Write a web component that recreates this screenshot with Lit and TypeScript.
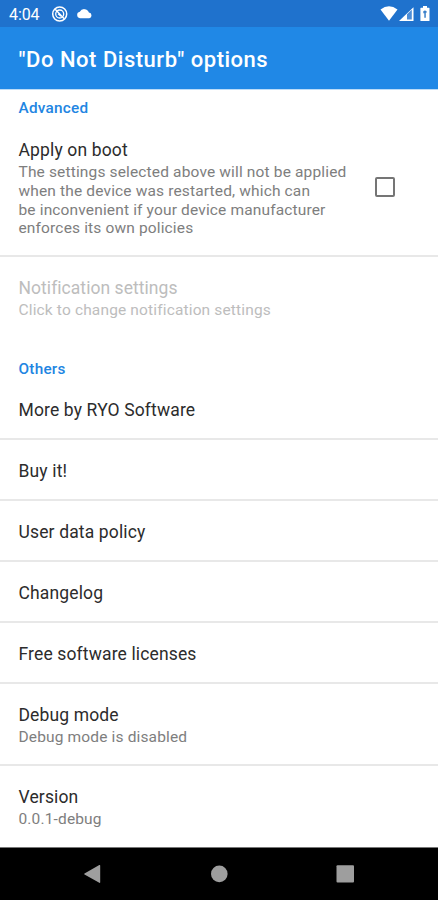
import { LitElement, html, css, svg } from "lit";
import { customElement } from "lit/decorators.js";

const entries = [
  { title: "More by RYO Software", kind: "first" },
  { title: "Buy it!" },
  { title: "User data policy" },
  { title: "Changelog" },
  { title: "Free software licenses" },
  { title: "Debug mode", summary: "Debug mode is disabled" },
  { title: "Version", summary: "0.0.1-debug", kind: "last" },
];

@customElement("app-root")
export class AppRoot extends LitElement {
  static styles = css`
    :host {
      display: flex;
      flex-direction: column;
      width: 438px;
      height: 900px;
      overflow: hidden;
      background: #fff;
      font-family: Roboto, "Liberation Sans", sans-serif;
      color: #2c2c2c;
    }
    * { box-sizing: border-box; }
    svg { display: block; }
    .status {
      height: 27px;
      flex: none;
      display: flex;
      align-items: center;
      background: #1f72cd;
      color: #fff;
      padding: 1px 0 0 9px;
    }
    .clock { width: 42px; font-size: 16px; line-height: 27px; letter-spacing: -0.1px; }
    .left { flex: 1; }
    .bar {
      height: 63px;
      flex: none;
      display: flex;
      align-items: center;
      padding: 3px 18px 0 18.5px;
      background: #2088e6;
      border-bottom: 1px solid #bcdcf8;
      color: #fff;
      font-size: 22px;
      font-weight: 500;
      letter-spacing: 0.52px;
    }
    .list { flex: 1; min-height: 0; display: flex; flex-direction: column; }
    .category {
      padding-left: 18.5px;
      color: #2285e2;
      font-size: 15.3px;
      line-height: 18px;
      font-weight: 500;
      letter-spacing: 0.25px;
      flex: none;
    }
    .advanced { margin-top: 9px; }
    .others { margin-top: 22px; }
    .row {
      display: flex;
      flex-direction: column;
      justify-content: center;
      height: 61px;
      flex: none;
      padding: 2px 18px 0 18.5px;
      border-bottom: 2px solid #e8e8e8;
    }
    .double { height: 82px; }
    .first { margin-top: 1px; }
    .last { height: 81px; border-bottom: 1px solid transparent; }
    .boot {
      height: 140px;
      flex-direction: row;
      align-items: center;
      padding-top: 5px;
    }
    .text { flex: 1; white-space: pre; }
    .title { font-size: 17.5px; line-height: 22px; letter-spacing: 0.14px; }
    .summary {
      font-size: 15.5px;
      line-height: 18.7px;
      letter-spacing: 0.15px;
      color: #7e7e7e;
      margin-top: 2px;
    }
    .disabled { height: 81px; border: 0; padding-top: 2px; }
    .disabled .title { letter-spacing: 0.05px; }
    .disabled .title, .disabled .summary { color: #bdbdbd; }
    .check {
      width: 20px;
      height: 20px;
      border: 2px solid #757575;
      border-radius: 2px;
      margin: 0 25px 4px 0;
    }
    .nav {
      height: 53px;
      flex: none;
      border-top: 1px solid #777;
      background: #000;
    }
  `;

  render() {
    return html`
      <div class="status">
        <span class="clock">4:04</span>
        <svg class="left" width="320" height="26" viewBox="51 1 320 26" preserveAspectRatio="xMinYMid meet">
          ${svg`
            <g fill="none" stroke="#fff">
              <circle cx="59.7" cy="14" r="7" stroke-width="1.5" />
              <circle cx="59.7" cy="14" r="4" stroke-width="1.3" />
              <path d="M55.2 9.3 64.2 18.7M58.2 13.7 61 16.3" stroke-width="1.4" />
            </g>
            <path fill="#fff" d="M80 18.200a3.300 3.300 0 0 1-.2-6.500 5 5 0 0 1 9.100.8A2.900 2.900 0 0 1 89.300 18.200Z" />
          `}
        </svg>
        <svg width="58" height="26" viewBox="380 1 58 26" fill="#fff">
          <path d="M380.500 9.600Q389 3 397.500 9.600L389 20.800Z" />
          <path d="M413.500 7.200V21H399Z" />
          <path d="M407 14.200 411.800 9.800V19.500H407Z" fill="#4c8dd7" />
          <path d="M423 6h4v1.700h2q.5 0 .5.600V20.500q0 .600-.5.600h-8q-.6 0-.6-.6V8.300q0-.6.6-.6h2Z" />
          <path d="M423.300 11.200q1.600-1.500 3.300 0v1.500h-.8v5h-1.500v-4.500h-1Z" fill="#397fc9" />
        </svg>
      </div>
      <div class="bar">"Do Not Disturb" options</div>
      <div class="list">
        <div class="category advanced">Advanced</div>
        <div class="row boot">
          <div class="text"><div class="title">Apply on boot</div><div class="summary">The settings selected above will not be applied
when the device was restarted, which can
be inconvenient if your device manufacturer
enforces its own policies</div></div>
          <div class="check"></div>
        </div>
        <div class="row disabled">
          <div class="title">Notification settings</div>
          <div class="summary">Click to change notification settings</div>
        </div>
        <div class="category others">Others</div>
        ${entries.map(
          (e) => html`<div class="row ${e.summary ? "double" : ""} ${e.kind ?? ""}">
            <div class="title">${e.title}</div>
            ${e.summary ? html`<div class="summary">${e.summary}</div>` : ""}
          </div>`
        )}
      </div>
      <div class="nav">
        <svg width="438" height="52" viewBox="0 848 438 52" fill="#9e9e9e">
          <path d="M84.500 873.400 99.300 865.100q.900-.400.900.500v16.700q0 .900-.900.500L84.500 874.600q-.800-.600 0-1.200Z" />
          <circle cx="219.300" cy="873.900" r="8.300" />
          <rect x="336.500" y="865.300" width="17.500" height="17.300" rx="1" />
        </svg>
      </div>
    `;
  }
}
